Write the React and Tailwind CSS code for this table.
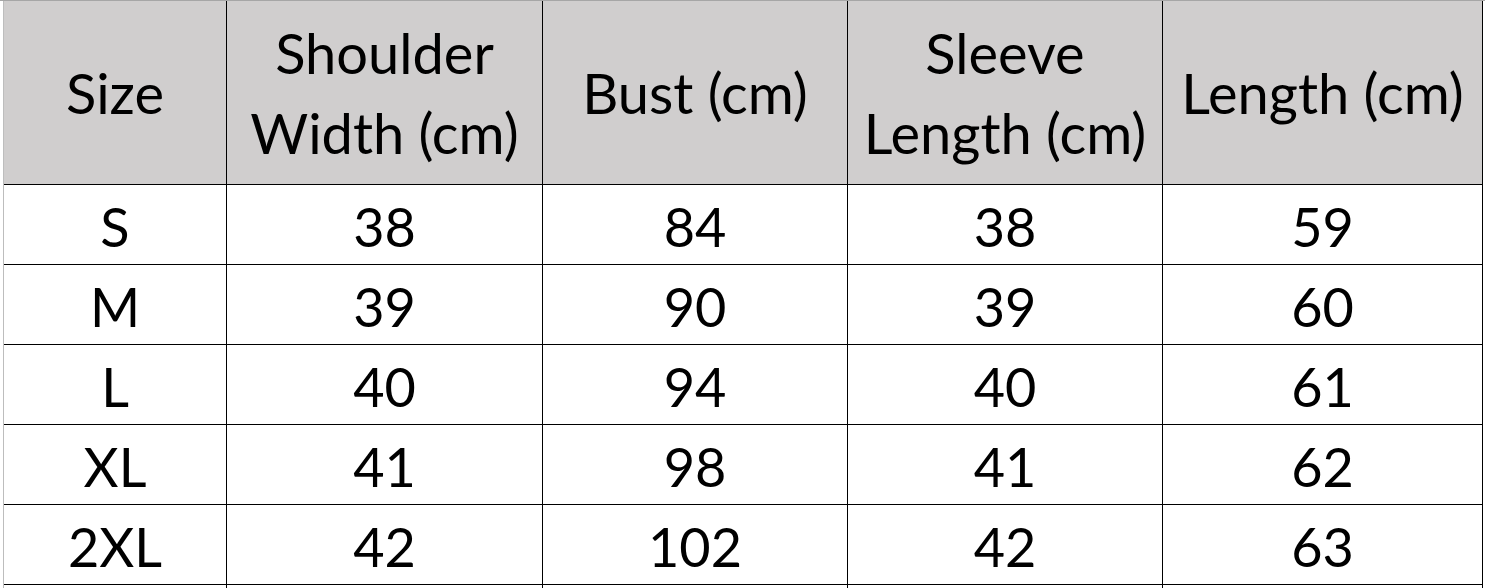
export default function App() {
  const header = [
    ["Size"],
    ["Shoulder", "Width (cm)"],
    ["Bust (cm)"],
    ["Sleeve", "Length (cm)"],
    ["Length (cm)"],
  ];
  const rows = [
    ["S", "38", "84", "38", "59"],
    ["M", "39", "90", "39", "60"],
    ["L", "40", "94", "40", "61"],
    ["XL", "41", "98", "41", "62"],
    ["2XL", "42", "102", "42", "63"],
  ];

  return (
    <div
      className="w-[1485px] h-[588px] bg-white overflow-hidden border-t border-[#a6a6a6] text-black"
      style={{ fontFamily: "Lato, 'Open Sans', sans-serif" }}
    >
      <div className="flex">
        <div className="w-[3px] shrink-0" />
        <div className="border-l border-[#bdbdbd] grid grid-cols-[223px_316px_305px_315px_320px] grid-rows-[184px_80px_80px_80px_80px_80px_8px]">
          {header.map((lines, i) => (
            <div
              key={i}
              className="bg-[#d0cece] border-r border-b border-black flex flex-col items-center justify-center text-[56px] leading-[80px]"
            >
              {lines.map((l) => (
                <span key={l}>{l}</span>
              ))}
            </div>
          ))}
          {rows.map((row) =>
            row.map((cell, j) => (
              <div
                key={row[0] + j}
                className="border-r border-b border-black flex items-center justify-center text-[54px] leading-none pt-[4px]"
              >
                {cell}
              </div>
            ))
          )}
          {[0, 1, 2, 3, 4].map((i) => (
            <div key={"tail" + i} className="border-r border-black" />
          ))}
        </div>
      </div>
    </div>
  );
}
